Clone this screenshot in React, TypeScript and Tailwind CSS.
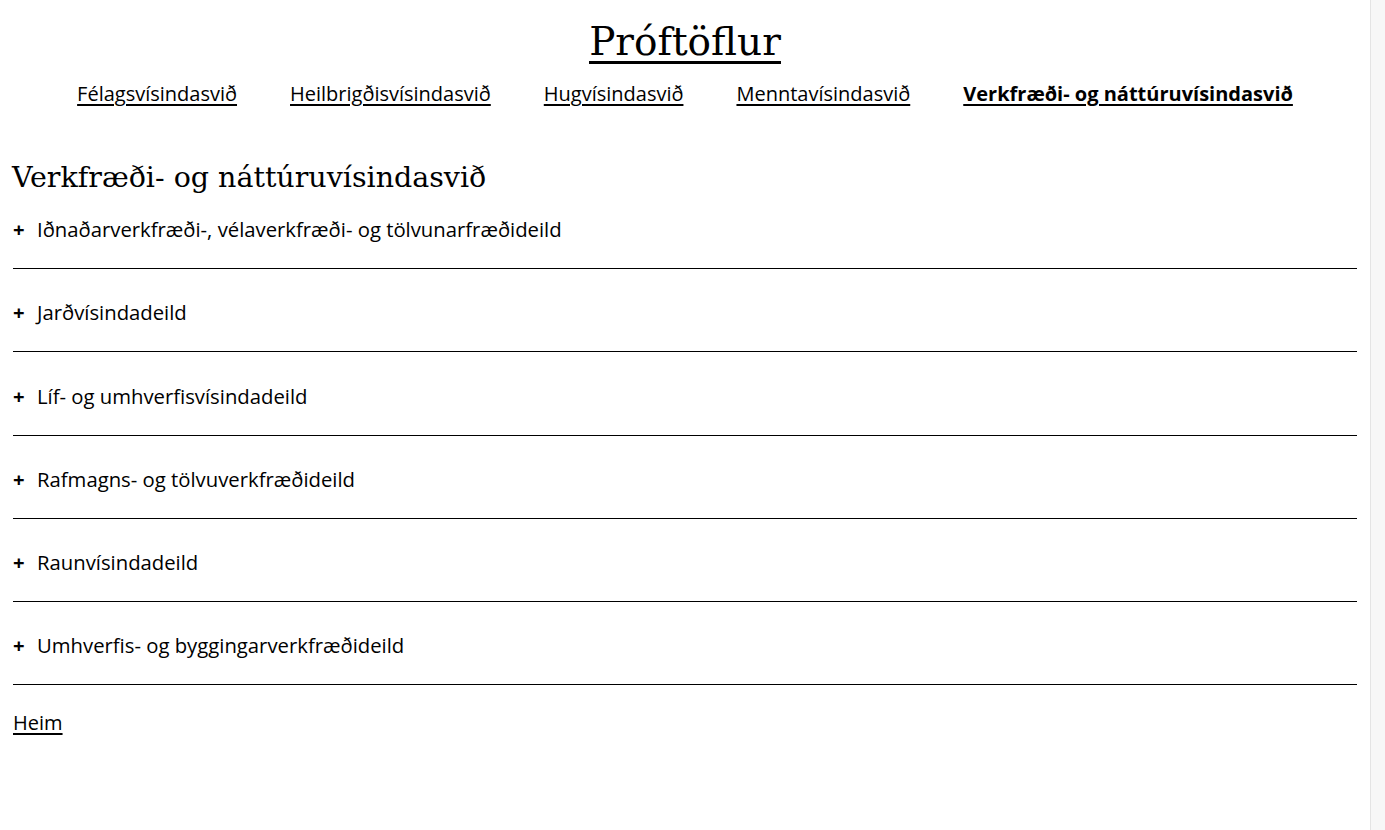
const departments = [
  "Félagsvísindasvið",
  "Heilbrigðisvísindasvið",
  "Hugvísindasvið",
  "Menntavísindasvið",
  "Verkfræði- og náttúruvísindasvið",
];

const faculties = [
  "Iðnaðarverkfræði-, vélaverkfræði- og tölvunarfræðideild",
  "Jarðvísindadeild",
  "Líf- og umhverfisvísindadeild",
  "Rafmagns- og tölvuverkfræðideild",
  "Raunvísindadeild",
  "Umhverfis- og byggingarverkfræðideild",
];

const serif = "font-['DejaVu_Serif','Liberation_Serif',serif]";

export default function App() {
  return (
    <div className="flex min-h-screen bg-white text-black font-['Open_Sans','Noto_Sans',sans-serif]">
      <div className="flex-1">
        <header className="flex flex-col items-center pt-[14px]">
          <h1 className={`${serif} text-[39px] leading-[56px] underline decoration-[3px] underline-offset-[6px]`}>
            <a href="#">Próftöflur</a>
          </h1>
          <nav className="mt-[10px] flex gap-[53px] text-[20px] leading-[28px]">
            {departments.map((d, i) => (
              <a
                key={d}
                href="#"
                className={`underline underline-offset-[3px] ${i === departments.length - 1 ? "font-bold" : ""}`}
              >
                {d}
              </a>
            ))}
          </nav>
        </header>

        <main className="px-[13px] pt-[50px]">
          <h2 className={`${serif} text-[28.5px] leading-[40px] -ml-[1px]`}>
            Verkfræði- og náttúruvísindasvið
          </h2>
          <ul className="mt-[17px]">
            {faculties.map((f, i) => (
              <li
                key={f}
                className={`flex items-center border-b border-black pb-[25px] text-[20.3px] leading-[28px] ${i === 0 ? "" : "pt-[29.3px]"}`}
              >
                <span className="w-[24px] font-bold">+</span>
                <span>{f}</span>
              </li>
            ))}
          </ul>
          <a href="#" className="mt-[24px] inline-block text-[20px] leading-[28px] underline underline-offset-[3px]">
            Heim
          </a>
        </main>
      </div>
      {/* scrollbar track */}
      <div className="w-[15px] shrink-0 border-l border-[#e4e4e4] bg-[#f7f7f7]" />
    </div>
  );
}
